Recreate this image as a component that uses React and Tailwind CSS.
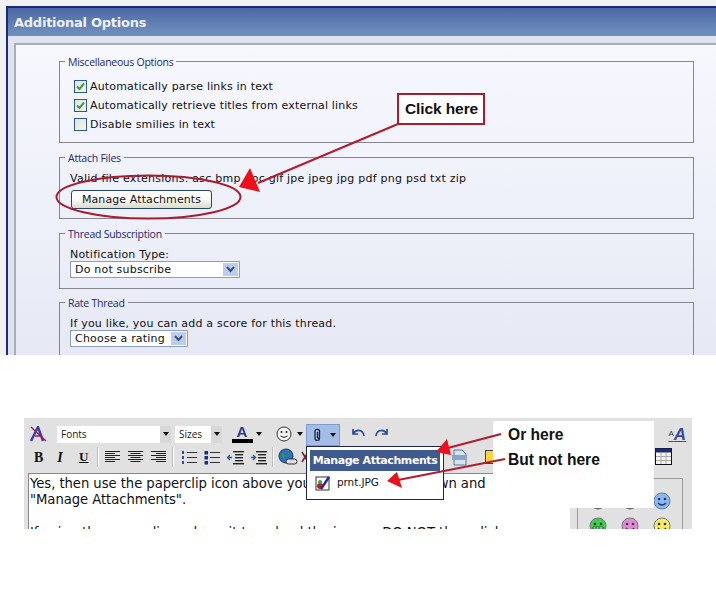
import React from "react";

function Fs({ legend, className, children }) {
  return (
    <fieldset className={`border border-[#85878c] rounded-none pl-[10px] pr-2 min-w-0 ${className}`}>
      <legend className="relative top-px -ml-[5px] px-[3px] text-[10.5px] leading-[14px] text-[#22296b] font-['Open_Sans',sans-serif] tracking-[-0.25px]">{legend}</legend>
      {children}
    </fieldset>
  );
}

function Check({ checked }) {
  return (
    <span className="w-[13px] h-[13px] shrink-0 border border-[#2a5c88] bg-gradient-to-br from-[#e2e2da] to-[#f6f6f2] flex items-center justify-center">
      {checked && (
        <svg width="9" height="9" viewBox="0 0 9 9"><path d="M1 4.500 L3.500 7 L8 1.500" fill="none" stroke="#3f9a45" strokeWidth="2" /></svg>
      )}
    </span>
  );
}

function Opt({ checked, children }) {
  return (
    <div className="flex items-center h-[19px] text-[11px] tracking-[0.17px] text-[#111] pl-[4px]">
      <Check checked={checked} />
      <span className="pl-[3px] relative top-[1px]">{children}</span>
    </div>
  );
}

function Select({ w, children }) {
  return (
    <div className={`${w} h-[17px] bg-white border border-[#8b9ec2] flex items-center justify-between pl-1 pr-[1px] text-[11px] leading-none text-[#111] tracking-[0.2px]`}>
      <span>{children}</span>
      <span className="w-[15px] h-[13px] bg-[#bcccec] flex items-center justify-center">
        <svg width="9" height="7" viewBox="0 0 9 7"><path d="M1 1 L4.500 5 L8 1" fill="none" stroke="#37507f" strokeWidth="2" /></svg>
      </span>
    </div>
  );
}

const Caret = () => (
  <svg width="6" height="4" viewBox="0 0 6 4" className="shrink-0"><path d="M0 0H6L3 4Z" fill="#111" /></svg>
);

const Lines = ({ kind }) => {
  const rows = [0, 2, 4, 6, 8, 10];
  return (
    <svg width="16" height="13" viewBox="0 0 16 13">
      {rows.map((y, i) => {
        const short = i % 2 === 1;
        const w = short ? 10 : 15;
        const x = kind === "left" ? 0 : kind === "center" ? (15 - w) / 2 : 15 - w;
        return <rect key={y} x={x} y={y} width={w} height="1" fill="#222" />;
      })}
    </svg>
  );
};

const List = ({ ordered }) => (
  <svg width="16" height="15" viewBox="0 0 16 15">
    {[1, 6, 11].map((y) => (
      <g key={y}>
        {ordered ? (
          <rect x="1" y={y} width="2" height="3" fill="#2b4fa0" />
        ) : (
          <rect x="0.500" y={y} width="3.500" height="3.500" fill="#16308a" />
        )}
        <rect x="6" y={y + 1} width="10" height="1" fill="#333" />
      </g>
    ))}
  </svg>
);

const Indent = ({ out }) => (
  <svg width="17" height="15" viewBox="0 0 17 15">
    {[1, 4, 7, 10, 13].map((y, i) => (
      <rect key={y} x={i === 0 || i === 4 ? 6 : 8} y={y} width={i === 0 || i === 4 ? 11 : 8} height="1.400" fill="#222" />
    ))}
    <path d={out ? "M5 7.500 L1 7.500 M3 5 L0.500 7.500 L3 10" : "M1 7.500 L5 7.500 M3 5 L5.500 7.500 L3 10"} stroke="#2c55a8" strokeWidth="1.300" fill="none" />
  </svg>
);

const Sep = () => <span className="block w-[2px] h-[20px] bg-[#bdbdbd] border-r border-white shrink-0" />;

const Smile = ({ color, eye = "#333", teeth, edge = "#777" }) => (
  <svg width="18" height="18" viewBox="0 0 18 18">
    <circle cx="9" cy="9" r="8" fill={color} stroke={edge} />
    <circle cx="6" cy="7" r="1.300" fill={eye} />
    <circle cx="12" cy="7" r="1.300" fill={eye} />
    {teeth ? (
      <path d="M4 10H14V14H4Z M7 10V14 M10 10V14 M4 12H14" stroke={eye} fill="#fff" strokeWidth="0.800" />
    ) : (
      <path d="M5 11 Q9 15 13 11" stroke={eye} strokeWidth="1.300" fill="none" />
    )}
  </svg>
);

export default function App() {
  return (
    <div className="relative w-[716px] h-[600px] bg-white overflow-hidden font-['DejaVu_Sans',sans-serif]">
      {/* top screenshot */}
      <section className="h-[355px] overflow-hidden bg-[#f1f1f1] pt-[6px] pl-[6px]">
        <div className="h-full border-l-2 border-t-2 border-[#1b2a78] bg-[#dfe3f0]">
          <div className="h-[28px] bg-gradient-to-b from-[#4a69a5] to-[#7391bd] pl-[6px] pt-[1px] flex items-center text-[13px] font-bold text-[#eef1f8] tracking-[-0.25px]">
            Additional Options
          </div>
          <div className="h-[7px] bg-[#dfe3f0]" />
          <div className="ml-[6px] h-[320px] border-t-2 border-l-2 border-[#a9adb8] bg-gradient-to-b from-[#f7f8fe] to-[#e6e9f5] pl-[43px] pr-[22px] pt-[9px] flex flex-col gap-[7px]">
            <Fs legend="Miscellaneous Options" className="h-[89px] pt-[9px] shrink-0">
              <Opt checked>Automatically parse links in text</Opt>
              <Opt checked>Automatically retrieve titles from external links</Opt>
              <Opt>Disable smilies in text</Opt>
            </Fs>
            <Fs legend="Attach Files" className="h-[69px] shrink-0 pt-[8px]">
              <div className="text-[11px] leading-[14px] text-[#111] tracking-[0.24px]">Valid file extensions: asc bmp doc gif jpe jpeg jpg pdf png psd txt zip</div>
              <button className="mt-[2px] ml-[1px] w-[141px] h-[19px] rounded-[3px] border border-[#25486b] bg-gradient-to-b from-white via-[#fbfbf6] to-[#dcd9ca] text-[11px] leading-none text-[#111] tracking-[0.1px]">Manage Attachments</button>
            </Fs>
            <Fs legend="Thread Subscription" className="h-[63px] shrink-0 pt-[8px]">
              <div className="text-[11px] leading-[14px] text-[#111] tracking-[0.2px]">Notification Type:</div>
              <div className="-mt-[1px]"><Select w="w-[170px]">Do not subscribe</Select></div>
            </Fs>
            <Fs legend="Rate Thread" className="-mt-px h-[80px] shrink-0 pt-[8px]">
              <div className="text-[11px] leading-[14px] text-[#111] tracking-[0.2px]">If you like, you can add a score for this thread.</div>
              <div className="-mt-[1px]"><Select w="w-[118px]">Choose a rating</Select></div>
            </Fs>
          </div>
        </div>
      </section>

      {/* bottom screenshot */}
      <section className="mt-[63px] ml-[24px] w-[668px] h-[111px] overflow-hidden bg-[#e1e1e1] pt-[2px]">
        <div className="h-[28px] flex items-center pl-[6px]">
          <svg width="17" height="16" viewBox="0 0 17 16" className="shrink-0">
            <path d="M1 15 L8 1 L13 15" fill="none" stroke="#3a3f9c" strokeWidth="2.400" />
            <path d="M1 1 L16 15 M5 10H12" stroke="#a01a5c" strokeWidth="1.400" />
          </svg>
          <div className="ml-[10px] w-[114px] h-[17px] bg-white flex items-center justify-between text-[10px] text-[#222] pl-[4px] font-['Open_Sans',sans-serif]">
            <span>Fonts</span>
            <span className="w-[11px] h-full bg-[#d8d8d8] flex items-center justify-center"><Caret /></span>
          </div>
          <div className="ml-[4px] w-[47px] h-[17px] bg-white flex items-center justify-between text-[10px] text-[#222] pl-[4px] font-['Open_Sans',sans-serif]">
            <span>Sizes</span>
            <span className="w-[11px] h-full bg-[#d8d8d8] flex items-center justify-center"><Caret /></span>
          </div>
          <div className="ml-[9px] w-[22px] flex flex-col items-center">
            <span className="text-[15px] leading-[14px] font-bold text-[#2b3a8c] font-['Liberation_Sans',sans-serif]">A</span>
            <span className="w-[21px] h-[4px] bg-black" />
          </div>
          <span className="ml-[3px]"><Caret /></span>
          <svg width="16" height="16" viewBox="0 0 16 16" className="ml-[14px] shrink-0">
            <circle cx="8" cy="8" r="7" fill="#f4f4f4" stroke="#333" />
            <circle cx="5.500" cy="6" r="1" fill="#222" /><circle cx="10.500" cy="6" r="1" fill="#222" />
            <path d="M4.500 10 Q8 13 11.500 10" stroke="#222" fill="none" />
          </svg>
          <span className="ml-[5px]"><Caret /></span>
          <div className="ml-[3px] w-[34px] h-[22px] mt-[2px] bg-[#a3bde6] border border-[#7f9ccd] flex items-center gap-[8px] pl-[6px]">
            <svg width="9" height="14" viewBox="0 0 9 14"><path d="M6.500 3.500V10.500C6.500 13 2 13 2 10.500V3C2 0.700 6.500 0.700 6.500 3V9.500C6.500 10.500 4.500 10.500 4.500 9.500V4" fill="none" stroke="#1c2440" strokeWidth="1.300" /></svg>
            <Caret />
          </div>
          <svg width="15" height="12" viewBox="0 0 15 12" className="ml-[11px] shrink-0"><path d="M2 1V6H7 M2 6C5 1 12 1 13 8" fill="none" stroke="#2a4a9c" strokeWidth="1.700" /></svg>
          <svg width="15" height="12" viewBox="0 0 15 12" className="ml-[8px] shrink-0"><path d="M13 1V6H8 M13 6C10 1 3 1 2 8" fill="none" stroke="#2a4a9c" strokeWidth="1.700" /></svg>
          <span className="ml-auto mr-[6px] text-[17px] leading-none font-bold italic text-[#3a4a9c] font-['Liberation_Sans',sans-serif] underline"><span className="relative -top-[4px] text-[8px] not-italic font-normal text-[#333]">A</span>A</span>
        </div>
        <div className="h-[18px] flex items-center pl-[10px]">
          <span className="w-[8px] text-center text-[14px] font-bold font-['Liberation_Serif',serif] text-[#111]">B</span>
          <span className="ml-[14px] w-[8px] text-center text-[14px] font-bold italic font-['Liberation_Serif',serif] text-[#111]">I</span>
          <span className="ml-[15px] w-[9px] text-center text-[13px] font-bold underline font-['Liberation_Serif',serif] text-[#111]">U</span>
          <span className="ml-[9px]"><Sep /></span>
          <span className="ml-[6px]"><Lines kind="left" /></span>
          <span className="ml-[7px]"><Lines kind="center" /></span>
          <span className="ml-[7px]"><Lines kind="right" /></span>
          <span className="ml-[5px]"><Sep /></span>
          <span className="ml-[7px]"><List ordered /></span>
          <span className="ml-[7px]"><List /></span>
          <span className="ml-[7px]"><Indent out /></span>
          <span className="ml-[6px]"><Indent /></span>
          <span className="ml-[5px]"><Sep /></span>
          <svg width="20" height="18" viewBox="0 0 20 18" className="ml-[4px] shrink-0">
            <circle cx="8" cy="8" r="7" fill="#2d6fc0" stroke="#12356f" />
            <path d="M4 4 Q8 6 6 10 Q3 10 4 4 M9 3 Q13 5 12 9Z" fill="#2e9a3c" />
            <rect x="8" y="11" width="11" height="5" rx="2.500" fill="#ddd" stroke="#333" />
          </svg>
          <svg width="8" height="14" viewBox="0 0 8 14" className="ml-[3px] shrink-0"><path d="M1 2L7 12M7 2L1 12" stroke="#7a2020" strokeWidth="1.500" /></svg>
          <svg width="16" height="17" viewBox="0 0 16 17" className="ml-[143px] shrink-0">
            <path d="M2 1H10L14 5V16H2Z" fill="#d4e2f2" stroke="#5a7699" />
            <rect x="0" y="6" width="15" height="5" fill="#8aa4c8" />
          </svg>
          <span className="ml-[17px] w-[15px] h-[14px] bg-[#ffd23f] border border-[#444] shrink-0" />
          <svg width="17" height="17" viewBox="0 0 17 17" className="ml-[155px] -mt-[2px] shrink-0">
            <rect x="0.500" y="0.500" width="16" height="16" fill="#f4f4f4" stroke="#111" />
            <rect x="0.500" y="0.500" width="16" height="4" fill="#1a2a78" />
            <path d="M6 5V16M11 5V16M1 8.500H16M1 12.500H16" stroke="#aaa" />
          </svg>
        </div>
        <div className="flex h-[63px] pl-[4px] pt-[7px]">
          <div className="w-[542px] shrink-0 bg-white border-l border-t border-[#888] pl-[1px] pt-[2px] text-[13.2px] leading-[16px] text-[#111] overflow-hidden whitespace-nowrap tracking-[-0.05px]">
            <div>Yes, then use the paperclip icon above your message, drop down and</div>
            <div>"Manage Attachments".</div>
            <div className="mt-[17px]">If using the paperclip and use it to upload the image, DO NOT then click</div>
          </div>
          <div className="ml-[7px] w-[106px] h-[60px] mt-[5px] border-l border-t border-r border-[#9a9a9a] shrink-0 grid grid-cols-[32px_32px_32px] justify-start items-center justify-items-center pl-[4px] pt-[9px] auto-rows-[25px]">
            <Smile color="#3a3a2a" /><Smile color="#3a3a2a" /><Smile color="#8fb7e8" eye="#1c3a80" edge="#5a7fb0" />
            <Smile color="#3ccf4e" eye="#0d3d16" teeth /><Smile color="#d88fd0" eye="#702060" /><Smile color="#f5ea6a" />
          </div>
        </div>
      </section>

      {/* white annotation patch over the bottom screenshot */}
      <div className="absolute left-[493px] top-[421px] w-[161px] h-[87px] bg-white pl-[15px] text-[#111] font-['Liberation_Sans',sans-serif] font-bold text-[15.6px] leading-[25px] pt-px">
        <div>Or here</div>
        <div>But not here</div>
      </div>

      {/* popup menu */}
      <div className="absolute left-[306px] top-[446px] w-[138px] h-[54px] bg-white border border-[#1b2550] p-[3px]">
        <div className="h-[21px] pt-[2px] bg-[#3f5a8c] text-white text-[11px] font-bold flex items-center justify-center whitespace-nowrap tracking-[-0.42px]">Manage Attachments</div>
        <div className="flex items-center h-[24px] pl-[5px] gap-[6px] text-[10.5px] text-[#111] tracking-[-0.1px]">
          <svg width="16" height="16" viewBox="0 0 16 16" className="shrink-0">
            <rect x="1" y="2" width="13" height="13" fill="#fff" stroke="#333" />
            <circle cx="5" cy="11" r="3" fill="#b02525" />
            <circle cx="5" cy="7" r="2" fill="#3aa040" />
            <path d="M6 14 L14 2" stroke="#2a2aa0" strokeWidth="2.500" />
          </svg>
          <span>prnt.JPG</span>
        </div>
      </div>

      {/* "Click here" callout */}
      <div className="absolute left-[397px] top-[93px] w-[88px] h-[32px] bg-white border-2 border-[#a81c30] flex items-center pl-[6px] pb-[1px] text-[15.5px] font-bold text-[#111] font-['Liberation_Sans',sans-serif] tracking-[-0.1px]">Click here</div>

      {/* arrows and ellipse */}
      <svg className="absolute inset-0 pointer-events-none" width="716" height="600" viewBox="0 0 716 600">
        <ellipse cx="148.500" cy="197" rx="92" ry="21.500" fill="none" stroke="#a81c30" strokeWidth="2" />
        <path d="M398 124 L258 183" stroke="#b01c30" strokeWidth="2" />
        <path d="M250 168 L239 187 L260 192 Z" fill="#ee0f1c" />
        <path d="M501 434 L444 449" stroke="#b01c30" strokeWidth="2" />
        <path d="M436 452 L447 439 L451 455 Z" fill="#ee0f1c" />
        <path d="M505 459 L398 480" stroke="#b01c30" strokeWidth="2" />
        <path d="M387 481 L397 472 L402 488 Z" fill="#ee0f1c" />
      </svg>
    </div>
  );
}
